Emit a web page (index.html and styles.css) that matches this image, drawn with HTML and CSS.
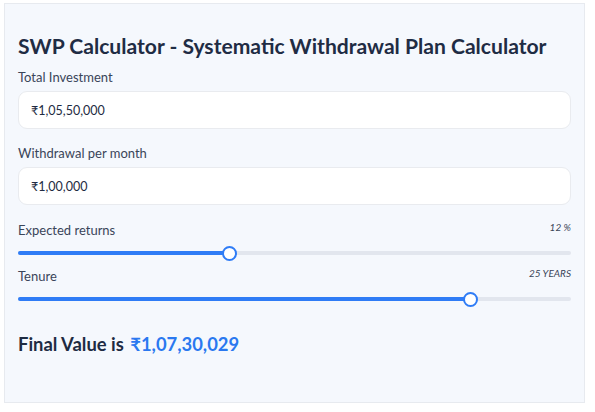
FILE: index.html
```html
<!DOCTYPE html>
<html lang="en">
<head>
<meta charset="utf-8">
<title>SWP Calculator</title>
<link rel="stylesheet" href="styles.css">
</head>
<body>
<section class="calc">
  <h1 class="calc-title">SWP Calculator - Systematic Withdrawal Plan Calculator</h1>

  <div class="field">
    <label class="field-label">Total Investment</label>
    <div class="field-input">₹1,05,50,000</div>
  </div>

  <div class="field">
    <label class="field-label">Withdrawal per month</label>
    <div class="field-input">₹1,00,000</div>
  </div>

  <div class="slider-field returns">
    <div class="slider-head">
      <span class="slider-label">Expected returns</span>
      <span class="slider-value">12 %</span>
    </div>
    <div class="track">
      <div class="fill" style="width: 38.2%"></div>
      <div class="thumb" style="left: 38.2%"></div>
    </div>
  </div>

  <div class="slider-field">
    <div class="slider-head">
      <span class="slider-label">Tenure</span>
      <span class="slider-value">25 YEARS</span>
    </div>
    <div class="track">
      <div class="fill" style="width: 81.9%"></div>
      <div class="thumb" style="left: 81.9%"></div>
    </div>
  </div>

  <p class="result">Final Value is <span class="result-amount">₹1,07,30,029</span></p>
</section>
</body>
</html>
```

FILE: styles.css
```css
* { box-sizing: border-box; }

html, body {
  margin: 0;
  padding: 0;
  background: #ffffff;
}

body {
  font-family: "Lato", "Noto Sans", sans-serif;
  color: #1e2b42;
}

.calc {
  margin: 3px 10px 0 4px;
  width: 581px;
  height: 400px;
  background: #f5f8fd;
  border: 1px solid #e7eaef;
  padding: 30px 13px 0 13px;
}

.calc-title {
  margin: 0;
  font-size: 21.1px;
  font-weight: 700;
  line-height: 24px;
  color: #1f2c44;
}

.field {
  display: flex;
  flex-direction: column;
}

.field:first-of-type { margin-top: 11px; }

.field + .field { margin-top: 16px; }

.field-label {
  font-size: 13px;
  line-height: 16px;
  color: #3a4559;
  margin-bottom: 6px;
}

.field-input {
  height: 38px;
  background: #ffffff;
  border: 1px solid #e9ebef;
  border-radius: 9px;
  padding: 0 12px;
  display: flex;
  align-items: center;
  font-size: 12.5px;
  color: #1e2b42;
}

.slider-field.returns { margin-top: 14px; }

.slider-field + .slider-field { margin-top: 10px; }

.slider-head {
  display: flex;
  justify-content: space-between;
  align-items: flex-start;
  height: 30px;
}

.slider-label {
  font-size: 13px;
  line-height: 16px;
  color: #3a4559;
  margin-top: 3px;
}

.slider-value {
  font-size: 10px;
  font-style: italic;
  line-height: 12px;
  color: #3a4559;
  margin-top: 2px;
}

.track {
  position: relative;
  height: 4px;
  border-radius: 2px;
  background: #e2e6ee;
  margin-top: 2px;
}

.fill {
  height: 4px;
  border-radius: 2px;
  background: #2f7cf6;
}

.thumb {
  position: absolute;
  top: 50%;
  width: 15px;
  height: 15px;
  margin: -7.5px 0 0 -7.5px;
  border-radius: 50%;
  background: #ffffff;
  border: 2.5px solid #2f7cf6;
}

.result {
  margin: 32px 0 0 0;
  font-size: 18.4px;
  font-weight: 700;
  line-height: 22px;
  color: #1e2b42;
}

.result-amount {
  color: #2a78f0;
  margin-left: 2px;
}
```
